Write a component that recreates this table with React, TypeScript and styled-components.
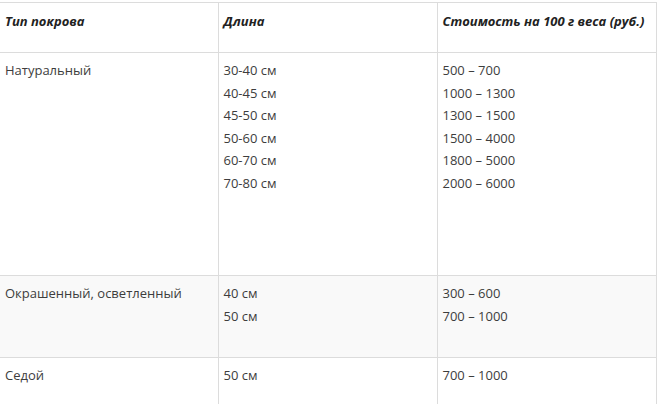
import React from "react";
import styled, { createGlobalStyle } from "styled-components";

const GlobalStyle = createGlobalStyle`
  html, body {
    margin: 0;
    padding: 0;
    background: #ffffff;
    overflow: hidden;
  }
`;

const Page = styled.div`
  padding-top: 2px;
  font-family: "Open Sans", "Liberation Sans", sans-serif;
  color: #3d3d3d;
`;

const Table = styled.table`
  width: 656px;
  border-collapse: collapse;
  table-layout: fixed;
  font-size: 13px;
`;

const Row = styled.tr<{ $height: number; $shaded?: boolean }>`
  height: ${({ $height }) => $height}px;
  background: ${({ $shaded }) => ($shaded ? "#f9f9f9" : "#ffffff")};
`;

const HeadCell = styled.th`
  text-align: left;
  vertical-align: top;
  font-weight: 700;
  font-style: italic;
  color: #222;
  padding: 9px 6px 0 5px;
  border: 1px solid #dcdcdc;
  border-left: none;
`;

const Cell = styled.td`
  vertical-align: top;
  padding: 6px 6px 0 5px;
  border: 1px solid #dcdcdc;
  border-left: none;
  line-height: 22.6px;
`;

const Line = styled.div`
  white-space: nowrap;
`;

interface IRow {
  kind: string;
  lengths: string[];
  prices: string[];
  height: number;
  shaded?: boolean;
}

const rows: IRow[] = [
  {
    kind: "Натуральный",
    lengths: ["30-40 см", "40-45 см", "45-50 см", "50-60 см", "60-70 см", "70-80 см"],
    prices: ["500 – 700", "1000 – 1300", "1300 – 1500", "1500 – 4000", "1800 – 5000", "2000 – 6000"],
    height: 223,
  },
  {
    kind: "Окрашенный, осветленный",
    lengths: ["40 см", "50 см"],
    prices: ["300 – 600", "700 – 1000"],
    height: 82,
    shaded: true,
  },
  {
    kind: "Седой",
    lengths: ["50 см"],
    prices: ["700 – 1000"],
    height: 60,
  },
];

const App: React.FC = () => {
  return (
    <Page>
      <GlobalStyle />
      <Table>
        <colgroup>
          <col style={{ width: 218 }} />
          <col style={{ width: 219 }} />
          <col style={{ width: 219 }} />
        </colgroup>
        <thead>
          <Row $height={50}>
            <HeadCell>Тип покрова</HeadCell>
            <HeadCell>Длина</HeadCell>
            <HeadCell>Стоимость на 100 г веса (руб.)</HeadCell>
          </Row>
        </thead>
        <tbody>
          {rows.map((r) => (
            <Row key={r.kind} $height={r.height} $shaded={r.shaded}>
              <Cell>
                <Line>{r.kind}</Line>
              </Cell>
              <Cell>
                {r.lengths.map((l) => (
                  <Line key={l}>{l}</Line>
                ))}
              </Cell>
              <Cell>
                {r.prices.map((p) => (
                  <Line key={p}>{p}</Line>
                ))}
              </Cell>
            </Row>
          ))}
        </tbody>
      </Table>
    </Page>
  );
};

export default App;
